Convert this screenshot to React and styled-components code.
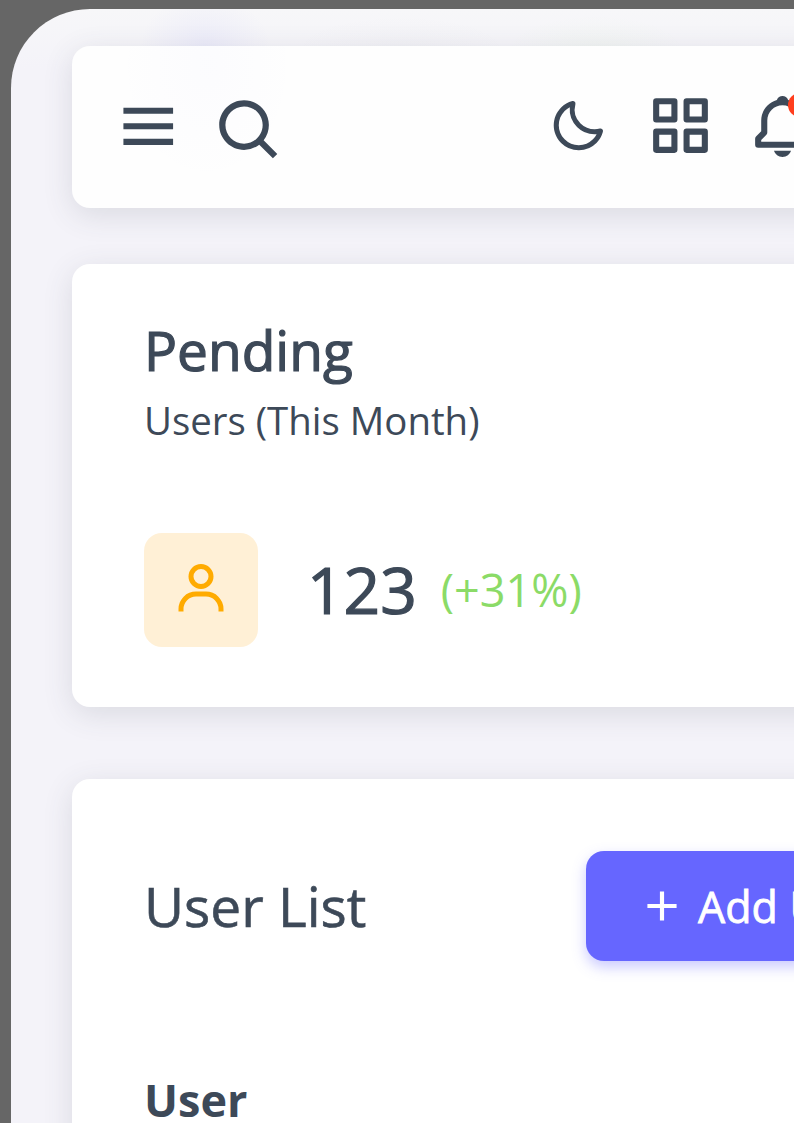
import React from "react";
import styled, { createGlobalStyle } from "styled-components";
import { BiMenu, BiSearch, BiMoon, BiGridAlt, BiBell, BiUser, BiPlus } from "react-icons/bi";

const GlobalStyle = createGlobalStyle`
  * { box-sizing: border-box; }
  body {
    margin: 0;
    background: #666666;
    color: #3d4958;
    font-family: "Open Sans", "Noto Sans", sans-serif;
    overflow: hidden;
  }
`;

const Screen = styled.div`
  width: 794px;
  height: 1123px;
  padding: 9px 0 0 11px;
  overflow: hidden;
`;

const Page = styled.main`
  width: 1022px;
  height: 1300px;
  padding: 37px 61px 0;
  border-top-left-radius: 79px;
  background:
    radial-gradient(ellipse 65px 50px at 194px 36px, rgba(105, 108, 255, 0.07), transparent),
    radial-gradient(ellipse 110px 34px at 390px 40px, rgba(61, 73, 88, 0.02), transparent),
    radial-gradient(ellipse 90px 34px at 585px 40px, rgba(113, 221, 55, 0.03), transparent),
    linear-gradient(#f7f7f9, #f4f3f9 60px);
`;

const Panel = styled.section`
  border-radius: 18px;
  background: #ffffff;
  box-shadow: 0 7px 30px rgba(61, 73, 88, 0.14);
`;

const Navbar = styled(Panel)`
  display: flex;
  align-items: flex-start;
  height: 162px;
  padding: 0 38px;
  margin-bottom: 56px;
  background:
    radial-gradient(ellipse 90px 120px at 135px 20px, rgba(105, 108, 255, 0.015), transparent),
    #fefefe;
`;

const Glyph = styled.span`
  display: flex;
  flex: none;
  margin-left: ${(p) => p.$gap || 0}px;
  margin-top: ${(p) => p.$top || 0}px;
  position: relative;
  color: ${(p) => p.$color || "inherit"};
  svg {
    display: block;
    width: ${(p) => p.$size}px;
    height: ${(p) => p.$size}px;
  }
`;

const Dot = styled.i`
  position: absolute;
  left: 42px;
  top: 3px;
  width: 24px;
  height: 24px;
  border-radius: 50%;
  background: #ff3e1d;
`;

const StatCard = styled(Panel)`
  height: 443px;
  padding: 48px 72px;
  margin-bottom: 72px;
`;

const Title = styled.h5`
  margin: 0;
  font-size: 55px;
  line-height: 76px;
  font-weight: 400;
  -webkit-text-stroke: ${(p) => p.$stroke}px currentColor;
`;

const Subtitle = styled.p`
  margin: 0;
  font-size: 38.4px;
  line-height: 64px;
`;

const StatRow = styled.div`
  display: flex;
  align-items: center;
  margin-top: 81px;
`;

const Avatar = styled.div`
  display: flex;
  align-items: center;
  justify-content: center;
  width: 114px;
  height: 114px;
  padding-bottom: 2px;
  margin-right: 49px;
  border-radius: 18px;
  background: #fff0d6;
`;

const Count = styled.span`
  font-size: 64px;
  line-height: 80px;
  -webkit-text-stroke: 1.2px currentColor;
`;

const Change = styled.span`
  margin-left: 24px;
  font-size: 45px;
  line-height: 70px;
  color: #8bdb67;
`;

const ListCard = styled(Panel)`
  height: 600px;
  padding: 72px;
`;

const ListHeader = styled.header`
  display: flex;
  align-items: center;
  justify-content: space-between;
  height: 110px;
`;

const AddButton = styled.button`
  display: flex;
  flex: none;
  align-items: center;
  gap: 11px;
  width: 314px;
  height: 110px;
  padding: 1px 0 0 51px;
  border: 0;
  border-radius: 18px;
  background: #6666ff;
  box-shadow: 0 6px 14px rgba(102, 102, 255, 0.35);
  color: #ffffff;
  font: 400 43px/60px "Open Sans", sans-serif;
  word-spacing: 0.5px;
  -webkit-text-stroke: 0.8px currentColor;
  white-space: nowrap;
`;

const ColumnHead = styled.div`
  margin-top: 109px;
  font-size: 45px;
  line-height: 60px;
  font-weight: 700;
`;

export default function App() {
  return (
    <Screen>
      <GlobalStyle />
      <Page>
        <Navbar as="nav">
          <Glyph $size={74.5} $gap={1} $top={42.5}><BiMenu /></Glyph>
          <Glyph $size={74.5} $gap={27} $top={48}><BiSearch /></Glyph>
          <Glyph $size={60} $gap={260.5} $top={50}><BiMoon /></Glyph>
          <Glyph $size={73} $gap={36.2} $top={43}><BiGridAlt /></Glyph>
          <Glyph $size={73} $gap={29.6} $top={43.5}>
            <BiBell />
            <Dot />
          </Glyph>
        </Navbar>

        <StatCard>
          <Title $stroke={1.2}>Pending</Title>
          <Subtitle>Users (This Month)</Subtitle>
          <StatRow>
            <Avatar>
              <Glyph $size={60} $color="#ffab00"><BiUser /></Glyph>
            </Avatar>
            <Count>123</Count>
            <Change>(+31%)</Change>
          </StatRow>
        </StatCard>

        <ListCard>
          <ListHeader>
            <Title $stroke={0.6}>User List</Title>
            <AddButton>
              <Glyph $size={50} $top={-2}><BiPlus /></Glyph>
              <span>Add User</span>
            </AddButton>
          </ListHeader>
          <ColumnHead>User</ColumnHead>
        </ListCard>
      </Page>
    </Screen>
  );
}
